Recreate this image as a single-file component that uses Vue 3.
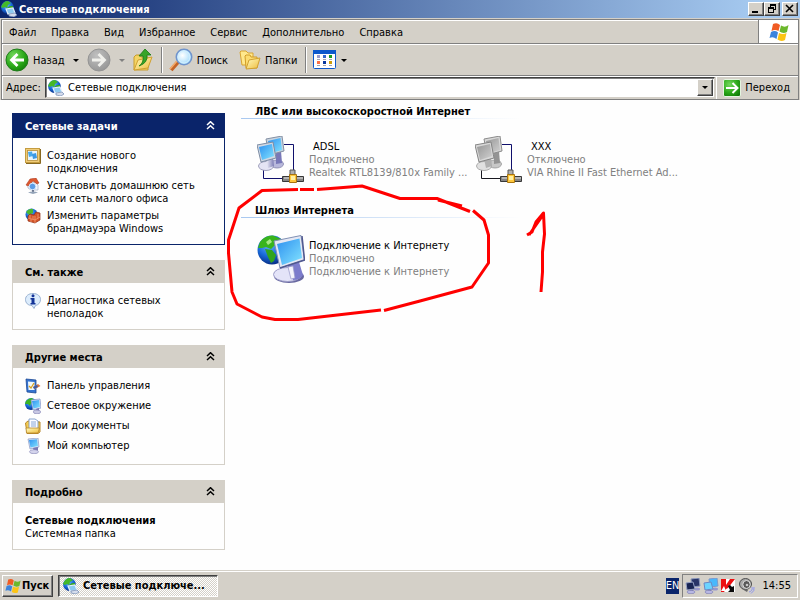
<script setup>
import { ref } from 'vue'

const menu = ['Файл', 'Правка', 'Вид', 'Избранное', 'Сервис', 'Дополнительно', 'Справка']
const address = ref('Сетевые подключения')

const panels = [
  {
    title: 'Сетевые задачи',
    primary: true,
    items: [
      { icon: 'new-connection', lines: ['Создание нового', 'подключения'] },
      { icon: 'home-network', lines: ['Установить домашнюю сеть', 'или сеть малого офиса'] },
      { icon: 'firewall', lines: ['Изменить параметры', 'брандмауэра Windows'] },
    ],
  },
  {
    title: 'См. также',
    items: [{ icon: 'info', lines: ['Диагностика сетевых', 'неполадок'] }],
  },
  {
    title: 'Другие места',
    items: [
      { icon: 'control-panel', lines: ['Панель управления'] },
      { icon: 'globe-pc', lines: ['Сетевое окружение'] },
      { icon: 'documents', lines: ['Мои документы'] },
      { icon: 'computer', lines: ['Мой компьютер'] },
    ],
  },
  { title: 'Подробно', details: { name: 'Сетевые подключения', kind: 'Системная папка' } },
]

const groups = [
  {
    title: 'ЛВС или высокоскоростной Интернет',
    items: [
      { icon: 'lan-on', name: 'ADSL', indent: true, status: 'Подключено', device: 'Realtek RTL8139/810x Family ...' },
      { icon: 'lan-off', name: 'XXX', indent: true, status: 'Отключено', device: 'VIA Rhine II Fast Ethernet Ad...' },
    ],
  },
  {
    title: 'Шлюз Интернета',
    items: [
      { icon: 'gateway', name: 'Подключение к Интернету', status: 'Подключено', device: 'Подключение к Интернету' },
    ],
  },
]
</script>

<template>
  <svg class="sprite" aria-hidden="true">
    <defs>
      <linearGradient id="g-screen" x1="0" y1="0" x2="1" y2="1">
        <stop offset="0" stop-color="#2c90f0" /><stop offset="1" stop-color="#84e4ff" />
      </linearGradient>
      <linearGradient id="g-grey" x1="0" y1="0" x2="1" y2="1">
        <stop offset="0" stop-color="#969696" /><stop offset="1" stop-color="#d0d0d0" />
      </linearGradient>
      <linearGradient id="g-stand" x1="0" y1="0" x2="1" y2="0">
        <stop offset="0" stop-color="#f4f4fc" /><stop offset="1" stop-color="#7c7cb4" />
      </linearGradient>
      <linearGradient id="g-folder" x1="0" y1="0" x2="1" y2="1">
        <stop offset="0" stop-color="#fffbc0" /><stop offset="1" stop-color="#eebc3c" />
      </linearGradient>
      <radialGradient id="g-sea" cx=".4" cy=".3" r=".7">
        <stop offset="0" stop-color="#68b8ff" /><stop offset=".6" stop-color="#1868d8" /><stop offset="1" stop-color="#083088" />
      </radialGradient>
      <radialGradient id="g-green" cx=".35" cy=".3" r=".8">
        <stop offset="0" stop-color="#74d85c" /><stop offset=".6" stop-color="#2aa818" /><stop offset="1" stop-color="#107c08" />
      </radialGradient>
      <radialGradient id="g-disc" cx=".4" cy=".3" r=".8">
        <stop offset="0" stop-color="#c0c0c0" /><stop offset="1" stop-color="#929292" />
      </radialGradient>
      <radialGradient id="g-lens" cx=".4" cy=".4" r=".6">
        <stop offset="0" stop-color="#fff" /><stop offset="1" stop-color="#a4dcfc" />
      </radialGradient>
    </defs>

    <symbol id="globe-pc" viewBox="0 0 16 16">
      <circle cx="6" cy="6" r="6" fill="url(#g-sea)" />
      <path d="M1 3Q4 0 7 0L9 2L6 5L5 8L3 6L0 6Z" fill="#3cb424" />
      <path d="M6 2L15 1L16 10L8 12Z" fill="#dce4f8" stroke="#7c90c4" stroke-width=".7" />
      <path d="M7 3L14 2L15 9L8.500 10.500Z" fill="url(#g-screen)" />
      <path d="M11 11L14 10L14 13L12 14Z" fill="#7474b4" />
      <ellipse cx="12" cy="13.900" rx="3.700" ry="1.900" fill="#c8c8e4" stroke="#8080b0" stroke-width=".6" />
    </symbol>

    <symbol id="connections" viewBox="0 0 16 16">
      <circle cx="6.500" cy="6.500" r="6.400" fill="url(#g-sea)" />
      <path d="M1 4Q3 0 7 0L10 2L7 4L6 7L4 6L2 7L0 6Z" fill="#44b828" />
      <path d="M6 7L9 5L12 5L12 8L9 11L8 12Z" fill="#38a824" />
      <path d="M5 8L12 7L14 12L7 13Z" fill="#8ccaf0" stroke="#e4f0fc" stroke-width="1.200" />
      <path d="M8 13L14 12L16 14L13 16L8 15Z" fill="#d4dcec" stroke="#7088b0" stroke-width=".7" />
    </symbol>

    <symbol id="computer" viewBox="0 0 16 16">
      <path d="M3 1L13 0L14 9L5 11Z" fill="#dce4f4" stroke="#8898c4" stroke-width=".7" />
      <path d="M4 2L12 1.200L13 8L5.500 9.500Z" fill="url(#g-screen)" />
      <path d="M8 10L13 9L13 14L9 14Z" fill="#7878b4" />
      <ellipse cx="9" cy="13.700" rx="4.500" ry="2" fill="#d4d4ec" stroke="#8484b4" stroke-width=".6" />
    </symbol>

    <symbol id="lan-on" viewBox="0 0 48 48">
      <path d="M27 8.500H36.500V35M6.500 34V42.500H25" fill="none" stroke="#10106c" />
      <ellipse cx="20" cy="28" rx="6.500" ry="4" fill="#b8b8dc" stroke="#8080a8" stroke-width=".8" />
      <path d="M19 16L24 15L25 27L19 28Z" fill="#7878b8" />
      <path d="M9 3L25 0L27 15L12 19Z" fill="#c8d4e0" stroke="#8490a4" />
      <path d="M11 5L23.500 2L25 14L14 17Z" fill="url(#g-screen)" />
      <ellipse cx="9" cy="30" rx="7.500" ry="4.500" fill="#e4e4f4" stroke="#8c8cac" stroke-width=".8" />
      <path d="M9 23L16 21L17 30L11 32Z" fill="url(#g-stand)" />
      <path d="M0 9L16 6L19 22L4 26Z" fill="#d0d8e4" stroke="#7c8ca4" />
      <path d="M2 11L15 8L17 20L5 24Z" fill="url(#g-screen)" />
      <path d="M33 34H38V40H33Z" fill="#b0b0b0" stroke="#585858" />
      <path d="M25.500 40.500H46.500V45.500H25.500Z" fill="#848484" stroke="#383838" />
      <path d="M27 42H46" stroke="#e4e4e4" />
      <path d="M32.500 38.500H39.500V46.500H32.500Z" fill="#ffc83c" stroke="#a87410" />
      <path d="M34 40H38V44H34Z" fill="#fff0a4" />
    </symbol>

    <symbol id="lan-off" viewBox="0 0 48 48">
      <path d="M27 8.500H36.500V35" fill="none" stroke="#10106c" />
      <path d="M6.500 34V42.500H25" fill="none" stroke="#181820" />
      <ellipse cx="20" cy="28" rx="6.500" ry="4" fill="#c8c8c8" stroke="#949494" stroke-width=".8" />
      <path d="M19 16L24 15L25 27L19 28Z" fill="#949494" />
      <path d="M9 3L25 0L27 15L12 19Z" fill="#d8d8d8" stroke="#8c8c8c" />
      <path d="M11 5L23.500 2L25 14L14 17Z" fill="url(#g-grey)" />
      <ellipse cx="9" cy="30" rx="7.500" ry="4.500" fill="#e0e0e0" stroke="#9c9c9c" stroke-width=".8" />
      <path d="M9 23L16 21L17 30L11 32Z" fill="#b0b0b0" />
      <path d="M0 9L16 6L19 22L4 26Z" fill="#d8d8d8" stroke="#848484" />
      <path d="M2 11L15 8L17 20L5 24Z" fill="url(#g-grey)" />
      <path d="M33 34H38V40H33Z" fill="#b0b0b0" stroke="#585858" />
      <path d="M25.500 40.500H46.500V45.500H25.500Z" fill="#848484" stroke="#383838" />
      <path d="M27 42H46" stroke="#e4e4e4" />
      <path d="M32.500 38.500H39.500V46.500H32.500Z" fill="#ffc83c" stroke="#a87410" />
      <path d="M34 40H38V44H34Z" fill="#fff0a4" />
    </symbol>

    <symbol id="gateway" viewBox="0 0 48 48">
      <circle cx="15" cy="15" r="14.500" fill="url(#g-sea)" />
      <path d="M3 7Q8 0 16 .500L24 4L21 9L17 11L14 14L9 12L5 13L1 13Z" fill="#38b41c" />
      <path d="M8 14L15 15L19 20L17 26L14 28L11 22Z" fill="#30a41c" />
      <path d="M9 7L13 4L15 7L11 10Z" fill="#a4e884" />
      <ellipse cx="32" cy="41.500" rx="15" ry="6.500" fill="#6868a0" />
      <ellipse cx="30.500" cy="39.500" rx="14" ry="7" fill="#e4e4f8" stroke="#9c9cc8" />
      <path d="M30 30L42 27L46 40Q43 45 36 45Z" fill="#7c7ccc" />
      <path d="M31 32L36 31L38 43L34 44Z" fill="#f4f4fc" stroke="#9898c8" stroke-width=".7" />
      <path d="M17 6L44 .500L47.500 25L23 33Z" fill="#e4e8f4" stroke="#8090b4" />
      <path d="M45 1L47.500 25L23 33" fill="none" stroke="#505890" stroke-width="1.500" />
      <path d="M20 9L42.500 3.500L45 23L25 30Z" fill="url(#g-screen)" />
    </symbol>

    <symbol id="flag" viewBox="0 0 20 18">
      <path d="M4 1Q8-1 11 2L9.500 8Q6 6 2.500 8Z" fill="#f05c24" />
      <path d="M12 2.500Q16 5 19.500 2L18 9Q14 11 10.500 8.500Z" fill="#6cb82c" />
      <path d="M2 9Q6 7 9 9.500L7.500 16Q4 13 .500 15Z" fill="#3c84dc" />
      <path d="M10 10Q14 12 17.500 10L16 17Q12 19 8.500 16.500Z" fill="#fcc414" />
    </symbol>

    <symbol id="back" viewBox="0 0 24 24">
      <circle cx="12" cy="12" r="11" fill="url(#g-green)" stroke="#207c1c" />
      <path d="M19 12H7M12.500 6L6.500 12L12.500 18" fill="none" stroke="#fff" stroke-width="2.800" />
    </symbol>
    <symbol id="forward" viewBox="0 0 24 24">
      <circle cx="12" cy="12" r="11" fill="url(#g-disc)" stroke="#949494" />
      <path d="M5 12H17M11.500 6L17.500 12L11.500 18" fill="none" stroke="#f0f0ec" stroke-width="2.800" />
    </symbol>
    <symbol id="up" viewBox="0 0 20 24">
      <path d="M1 9L3 7H7L8 9H15V22H1Z" fill="#f4d464" stroke="#c89c2c" />
      <path d="M1 22L5 12L19 9L15 20Z" fill="url(#g-folder)" stroke="#d0a030" />
      <path d="M6 18Q11 15 10 8H6L12 1L18 7H14Q15 15 6 18Z" fill="#38a428" stroke="#187810" stroke-width=".8" />
    </symbol>
    <symbol id="search" viewBox="0 0 24 24">
      <path d="M2 22L9 14" stroke="#c46428" stroke-width="4" />
      <path d="M1 21L8 13" stroke="#f4ac6c" stroke-width="1.500" />
      <circle cx="15" cy="9" r="7.700" fill="url(#g-lens)" stroke="#7094cc" stroke-width="1.600" />
      <circle cx="15" cy="9" r="6" fill="none" stroke="#d4f0ff" />
    </symbol>
    <symbol id="folders" viewBox="0 0 22 20">
      <path d="M1 2L2 1H7L9 3H14V15H3Z" fill="#ffe88c" stroke="#d8a430" />
      <path d="M6 6L7 5H11L12 7H18V18H7Z" fill="#fcdc70" stroke="#d09c28" />
      <path d="M7 19L10 10L21 8L18 18Z" fill="url(#g-folder)" stroke="#d0a030" />
    </symbol>
    <symbol id="views" viewBox="0 0 24 20">
      <rect x=".5" y=".5" width="22" height="18" rx="1" fill="#fff" stroke="#0c58cc" />
      <path d="M0 0H23V4H0Z" fill="#0c58cc" />
      <path d="M4 5H7V8H4Z" fill="#9c9ccc" /><path d="M10 5H13V8H10Z" fill="#3468cc" /><path d="M16 5H19V8H16Z" fill="#189c20" />
      <path d="M4 11H7V14H4Z" fill="#fc7044" /><path d="M10 11H13V14H10Z" fill="#0838a0" /><path d="M16 11H19V14H16Z" fill="#cc9c08" />
      <path d="M4 9.500H7M10 9.500H13M16 9.500H19M4 15.500H7M10 15.500H13M16 15.500H19" stroke="#a0a4b0" />
    </symbol>
    <symbol id="go" viewBox="0 0 18 18">
      <rect x=".5" y=".5" width="17" height="17" rx="1.500" fill="url(#g-green)" stroke="#e4f4e0" />
      <path d="M3 9H14M9.500 4L14.500 9L9.500 14" fill="none" stroke="#fff" stroke-width="2" />
    </symbol>

    <symbol id="new-connection" viewBox="0 0 16 16">
      <rect x=".5" y=".5" width="14" height="14" fill="#f0cc78" stroke="#c49c40" />
      <path d="M15.500 1V15.500H1" fill="none" stroke="#886820" />
      <rect x="2.500" y="2.500" width="10" height="10" fill="#e8f4fc" stroke="#b89038" stroke-width=".8" />
      <path d="M3 4L7 3.500L8 8L4 9Z" fill="#48a8ec" /><path d="M7 6L11 5L12 10L8 11Z" fill="#3c98e4" />
    </symbol>
    <symbol id="home-network" viewBox="0 0 16 16">
      <path d="M3 6L10 4L13 7V12L6 12L3 10Z" fill="#f4f8fc" stroke="#90a0b8" stroke-width=".6" />
      <path d="M1 7L5 1L11 0L14 5L12 6L8 3L3 8Z" fill="#dc5830" stroke="#a43418" stroke-width=".5" />
      <circle cx="7.500" cy="8.500" r="3.300" fill="#5c9ce4" stroke="#d8e8fc" />
      <path d="M7 12H9V14H7Z" fill="#6c7890" /><path d="M3 14.500Q8 12.500 13 14.500L8 16Z" fill="#94a4b8" />
    </symbol>
    <symbol id="firewall" viewBox="0 0 16 16">
      <circle cx="6.500" cy="6.500" r="6" fill="url(#g-sea)" />
      <path d="M1 4Q4 0 8 1L8 5L4 7Z" fill="#4cb830" />
      <path d="M3 8L5 6L9 7L11 4L15 5V12L10 15L3 13Z" fill="#d45428" stroke="#902c14" stroke-width=".7" />
      <path d="M3 10L10 12L15 9M5 7V10M8 8V11M6 11V14M10 8V15M13 6V10" fill="none" stroke="#f49c74" stroke-width=".8" />
    </symbol>
    <symbol id="info" viewBox="0 0 16 16">
      <path d="M8 .5C12.500 .500 15.500 3 15.500 6.500C15.500 10 13 12 10.500 12.500L9 15.500L7 12.500C3 12.500 .500 10 .500 6.500C.500 3 3.500 .500 8 .500Z" fill="#dcecfc" stroke="#98b0d0" />
      <circle cx="8" cy="2.800" r="1.500" fill="#143498" />
      <path d="M5.500 5H9.500V10H10.500V11.500H5.500V10H6.500V6.500H5.500Z" fill="#143498" />
    </symbol>
    <symbol id="control-panel" viewBox="0 0 16 16">
      <path d="M1 1L11 2V15L2 14Z" fill="#3474d0" stroke="#1c4894" stroke-width=".8" />
      <path d="M3 3.500L9.500 4V12L3.500 12Z" fill="#f0f8fc" />
      <path d="M4 8L6 10L9 5" fill="none" stroke="#d8a020" stroke-width="1.300" />
      <path d="M8 9L13 6L15.500 8L10 11Z" fill="#d87840" /><path d="M8 9L12 7L13 9L9 11Z" fill="#385cac" />
    </symbol>
    <symbol id="documents" viewBox="0 0 16 16">
      <path d="M.500 5L3 3L15 4V14L13 15.500H2Z" fill="#f4cc50" stroke="#b8882c" />
      <path d="M4 1H10L13 3V12H4Z" fill="#fcfcff" stroke="#6c90c4" stroke-width=".8" />
      <path d="M6 4H11M6 6H11M6 8H11" stroke="#88a8d8" />
      <path d="M1 10H14.500L13 15H1.500Z" fill="url(#g-folder)" stroke="#b8882c" stroke-width=".8" />
    </symbol>

    <symbol id="tray-lan-idle" viewBox="0 0 16 16">
      <path d="M6 1L14 0L15 8L7 9Z" fill="#283468" stroke="#8c98bc" /><ellipse cx="12" cy="11" rx="3" ry="1.500" fill="#9898cc" />
      <path d="M1 5L8 4L10 11L2 12Z" fill="#182454" stroke="#94a0c4" /><path d="M5 12H8V14H5Z" fill="#7c7cb4" /><ellipse cx="6" cy="14" rx="4" ry="1.700" fill="#b8b8e4" stroke="#6c6ca4" stroke-width=".5" />
    </symbol>
    <symbol id="tray-lan" viewBox="0 0 16 16">
      <path d="M6 1L14 0L15 8L7 9Z" fill="#48b8fc" stroke="#7c98cc" /><ellipse cx="12" cy="11" rx="3" ry="1.500" fill="#9898cc" />
      <path d="M1 5L8 4L10 11L2 12Z" fill="#6cd4ff" stroke="#6c88c4" /><path d="M5 12H8V14H5Z" fill="#7c7cb4" /><ellipse cx="6" cy="14" rx="4" ry="1.700" fill="#b8b8e4" stroke="#6c6ca4" stroke-width=".5" />
    </symbol>
    <symbol id="tray-antivirus" viewBox="0 0 16 16">
      <path d="M0 1H14V14H0Z" fill="#fff" />
      <path d="M0 1H5V7L9 1H14L7 10L5 11L3 14H0Z" fill="#ec1010" />
      <path d="M0 13L3 8L5 13" fill="#fff" />
      <path d="M7 8L9 7L11 9L13 8V14H7L9 12Z" fill="#0c0c0c" />
    </symbol>
    <symbol id="tray-sound" viewBox="0 0 16 16">
      <ellipse cx="6.500" cy="6" rx="6" ry="5.500" fill="#a8a8a8" stroke="#4c4c4c" />
      <ellipse cx="7.500" cy="6.500" rx="3.700" ry="4" fill="#585858" stroke="#e0e0e0" />
      <circle cx="8" cy="7" r="1.300" fill="#c8c8c8" />
      <path d="M3 11L8 14L9 12Z" fill="#686868" />
      <path d="M10 14Q14 13 13 9M12 15.500Q16 13 15 9" fill="none" stroke="#8c94f0" />
    </symbol>
  </svg>

  <div class="desktop">
    <header class="titlebar">
      <svg class="i16"><use href="#connections" /></svg>
      <h1>Сетевые подключения</h1>
      <div class="captions">
        <button class="raised caption" aria-label="Свернуть">
          <svg viewBox="0 0 12 10"><path d="M2 8H8" stroke="#000" stroke-width="2" /></svg>
        </button>
        <button class="raised caption" aria-label="Восстановить">
          <svg viewBox="0 0 12 10"><path d="M4 1H10M9.500 1V6M4.500 1V4M8 5.500H10M2 4H8M2.500 4V9M7.500 4V9M2 8.500H8" fill="none" stroke="#000" /><path d="M4 1H10M2 4H8" stroke="#000" stroke-width="2" /></svg>
        </button>
        <button class="raised caption close" aria-label="Закрыть">
          <svg viewBox="0 0 12 10"><path d="M2 1L9 8M9 1L2 8" stroke="#000" stroke-width="1.600" /></svg>
        </button>
      </div>
    </header>

    <div class="frame">
      <nav class="menubar">
        <div class="menus"><button v-for="m in menu" :key="m">{{ m }}</button></div>
        <div class="brand"><svg class="flag"><use href="#flag" /></svg></div>
      </nav>

      <div class="toolbar">
        <button class="tool"><svg class="i24"><use href="#back" /></svg>Назад</button>
        <button class="drop" aria-label="История назад"><i class="tri" /></button>
        <button class="tool" aria-label="Вперёд"><svg class="i24"><use href="#forward" /></svg></button>
        <button class="drop off" aria-label="История вперёд"><i class="tri" /></button>
        <button class="tool" aria-label="Вверх"><svg class="up"><use href="#up" /></svg></button>
        <span class="sep" />
        <button class="tool"><svg class="i24"><use href="#search" /></svg>Поиск</button>
        <button class="tool folders"><svg class="fold"><use href="#folders" /></svg>Папки</button>
        <span class="sep" />
        <button class="tool" aria-label="Вид"><svg class="views"><use href="#views" /></svg><i class="tri" /></button>
      </div>

      <form class="address" @submit.prevent>
        <label for="addr">Адрес:</label>
        <div class="combo">
          <svg class="i16"><use href="#connections" /></svg>
          <input id="addr" v-model="address" type="text" />
          <button type="button" class="raised arrow" aria-label="Список адресов"><i class="tri" /></button>
        </div>
        <button class="go"><svg><use href="#go" /></svg>Переход</button>
      </form>
    </div>

    <main class="content">
      <aside class="sidebar">
        <section v-for="p in panels" :key="p.title" class="panel" :class="{ primary: p.primary }">
          <header>
            <h2>{{ p.title }}</h2>
            <button :aria-label="'Свернуть: ' + p.title">
              <svg viewBox="0 0 9 9"><path d="M1 4L4.500 .700L8 4M1 8L4.500 4.700L8 8" fill="none" stroke="currentColor" stroke-width="1.500" /></svg>
            </button>
          </header>
          <ul v-if="p.items">
            <li v-for="it in p.items" :key="it.icon">
              <a href="#"><svg class="i16"><use :href="'#' + it.icon" /></svg><span><template v-for="(l, n) in it.lines" :key="l"><br v-if="n" />{{ l }}</template></span></a>
            </li>
          </ul>
          <div v-else class="details"><b>{{ p.details.name }}</b><span>{{ p.details.kind }}</span></div>
        </section>
      </aside>

      <div class="list">
        <section v-for="g in groups" :key="g.title" class="group">
          <h2>{{ g.title }}</h2>
          <div class="items">
            <a v-for="c in g.items" :key="c.name" href="#" class="conn">
              <svg><use :href="'#' + c.icon" /></svg>
              <span class="text">
                <span class="name" :class="{ indent: c.indent }">{{ c.name }}</span>
                <span>{{ c.status }}</span>
                <span>{{ c.device }}</span>
              </span>
            </a>
          </div>
        </section>
      </div>

      <!-- freehand red marks lying over the list -->
      <svg class="ink" viewBox="220 180 340 150" aria-hidden="true">
        <path d="M298 189.500L262 190.500L239 208L228.500 240V253L232 292L237 304L262 317L275 319.500H298L381 310M384 310.500L420 301L472 287L488.500 263V235L484 220L473 210.500M470 211.500L437 198.500H400L362 186L337 188L317 189.500M314 189.500H300M438 200L462 206" />
        <path d="M527 235L532 232L536 222L543.500 213L544.500 234L542.500 252V272L541 292M529 235L543 215" />
      </svg>
    </main>

    <footer class="taskbar">
      <button class="raised start"><svg><use href="#flag" /></svg>Пуск</button>
      <button class="task"><svg class="i16"><use href="#connections" /></svg><span>Сетевые подключе...</span></button>
      <span class="lang">EN</span>
      <div class="tray">
        <svg class="i16"><use href="#tray-lan-idle" /></svg>
        <svg class="i16"><use href="#tray-lan" /></svg>
        <svg class="i16"><use href="#tray-antivirus" /></svg>
        <svg class="i16"><use href="#tray-sound" /></svg>
        <time>14:55</time>
      </div>
    </footer>
  </div>
</template>

<style>
body {
  background: #fefefe;
}
</style>

<style scoped>
* {
  box-sizing: border-box;
}
.sprite {
  position: absolute;
  width: 0;
  height: 0;
}
.desktop {
  display: flex;
  flex-direction: column;
  min-height: 100vh;
  font: 11px/13px Tahoma, "DejaVu Sans Condensed", "DejaVu Sans", sans-serif;
  color: #000;
}
button,
input {
  font: inherit;
  color: inherit;
  background: none;
  border: 0;
  padding: 0;
  margin: 0;
}
a {
  color: inherit;
  text-decoration: none;
}
svg {
  flex: none;
  display: block;
}
h1,
h2 {
  margin: 0;
  font-size: 11px;
  line-height: 13px;
  font-weight: bold;
}
.i16 {
  width: 16px;
  height: 16px;
}
.i24 {
  width: 24px;
  height: 24px;
}
.raised {
  background: #d4d0c8;
  border: 1px solid;
  border-color: #fff #404040 #404040 #fff;
  box-shadow: inset -1px -1px #808080;
}
.tri {
  display: block;
  border: 3px solid transparent;
  border-top-color: currentColor;
  border-bottom: 0;
}

.titlebar {
  display: flex;
  align-items: center;
  gap: 2px;
  height: 18px;
  padding: 0 2px 0 1px;
  background: linear-gradient(90deg, #0a246a, #a6caf0 95%);
  color: #fff;
}
.captions {
  display: flex;
  margin-left: auto;
}
.caption {
  width: 16px;
  height: 14px;
}
.caption svg {
  width: 12px;
  height: 10px;
  margin: 1px;
}
.close {
  margin-left: 2px;
}

.frame {
  background: #d4d0c8;
  padding: 1px 1px 0;
}
.frame > * {
  border: 1px solid #808080;
  border-top: 0;
  box-shadow: inset 1px 1px #fff;
}
.menubar {
  display: flex;
  height: 25px;
}
.frame > .menubar {
  border-top: 1px solid #808080;
}
.menus {
  flex: 1;
  display: flex;
  align-items: center;
  gap: 15px;
  padding: 1px 0 0 7px;
  border-right: 1px solid #808080;
}
.brand {
  width: 39px;
  display: flex;
  align-items: center;
  justify-content: center;
  background: #fff;
}
.flag {
  width: 20px;
  height: 18px;
}
.toolbar {
  display: flex;
  align-items: center;
  height: 32px;
  padding: 1px 0 0 3px;
}
.tool {
  display: flex;
  align-items: center;
  gap: 4px;
}
.drop {
  padding: 8px;
}
.off {
  color: #808080;
}
.up {
  width: 20px;
  height: 24px;
}
.sep {
  width: 2px;
  height: 26px;
  margin: 0 6px 0 8px;
  border-left: 1px solid #808080;
  border-right: 1px solid #fff;
}
.folders {
  margin-left: 11px;
}
.fold {
  width: 22px;
  height: 20px;
}
.views {
  width: 24px;
  height: 20px;
}
.address {
  display: flex;
  align-items: center;
  height: 24px;
  padding-left: 4px;
}
.address label {
  width: 39px;
}
.combo {
  flex: 1;
  display: flex;
  align-items: center;
  gap: 4px;
  height: 21px;
  padding: 1px 1px 1px 2px;
  background: #fff;
  border: 1px solid;
  border-color: #404040 #d4d0c8 #d4d0c8 #404040;
  box-shadow: inset 1px 1px #808080;
}
.combo input {
  flex: 1;
  min-width: 0;
  outline: 0;
}
.arrow {
  width: 16px;
  height: 17px;
  display: grid;
  place-items: center;
}
.go {
  display: flex;
  align-items: center;
  gap: 4px;
  padding: 0 8px 0 6px;
  margin-left: 1px;
  height: 22px;
  border-left: 1px solid #fff;
}
.go svg {
  width: 18px;
  height: 18px;
}

.content {
  position: relative;
  flex: 1;
  display: flex;
  background: #fefefe;
}
.sidebar {
  display: flex;
  flex-direction: column;
  gap: 15px;
  width: 225px;
  padding: 13px 0 20px 12px;
}
.panel {
  border: 1px solid #d4d0c8;
  border-top: 0;
}
.panel header {
  display: flex;
  align-items: center;
  justify-content: space-between;
  height: 23px;
  padding: 0 9px 0 12px;
  background: #d4d0c8;
}
.panel header h2 {
  padding-top: 2px;
}
.panel header svg {
  width: 9px;
  height: 9px;
}
.panel.primary {
  border-color: #0a246a;
}
.primary header {
  height: 25px;
  background: #0a246a;
  color: #fff;
}
.panel ul {
  list-style: none;
  margin: 0;
  padding: 10px 8px 9px 12px;
  display: flex;
  flex-direction: column;
  gap: 3px;
}
.panel a {
  display: flex;
  gap: 6px;
  min-height: 17px;
}
.panel a span {
  padding-top: 1px;
}
.details {
  display: flex;
  flex-direction: column;
  padding: 11px 12px 9px;
}

.list {
  flex: 1;
  min-width: 0;
  padding-left: 16px;
}
.group {
  padding-bottom: 15px;
}
.group h2 {
  height: 19px;
  padding: 5px 0 0 14px;
  background: linear-gradient(90deg, #a8c8f0, #fefefe 280px) 0 100% / 100% 1px no-repeat;
}
.items {
  display: flex;
  flex-wrap: wrap;
  padding: 17px 0 0 16px;
}
.conn {
  display: flex;
  gap: 4px;
  width: 218px;
}
.conn svg {
  width: 48px;
  height: 48px;
}
.text {
  display: flex;
  flex-direction: column;
  padding-top: 4px;
  color: #808080;
  white-space: nowrap;
}
.name {
  color: #000;
}
.indent {
  padding-left: 4px;
}
.ink {
  position: absolute;
  left: 220px;
  top: 80px;
  width: 340px;
  height: 150px;
  pointer-events: none;
}
.ink path {
  fill: none;
  stroke: #f00;
  stroke-width: 3;
  stroke-linejoin: round;
}

.taskbar {
  display: flex;
  align-items: center;
  height: 30px;
  padding: 1px 2px 0;
  background: #d4d0c8;
  box-shadow: inset 0 1px #d4d0c8, inset 0 2px #fff;
  font-weight: bold;
}
.start {
  display: flex;
  align-items: center;
  gap: 1px;
  width: 51px;
  height: 22px;
  padding: 0 2px;
}
.start svg {
  width: 16px;
  height: 16px;
}
.task {
  display: flex;
  align-items: center;
  gap: 4px;
  width: 160px;
  height: 22px;
  margin-left: 5px;
  padding: 0 4px;
  border: 1px solid;
  border-color: #404040 #fff #fff #404040;
  box-shadow: inset 1px 1px #808080;
  background: repeating-conic-gradient(#fff 0 25%, #d4d0c8 0 50%) 0 0 / 2px 2px;
  white-space: nowrap;
}
.lang {
  margin-left: auto;
  height: 16px;
  line-height: 16px;
  background: #0a246a;
  color: #fff;
  font-weight: normal;
}
.tray {
  display: flex;
  align-items: center;
  gap: 2px;
  height: 24px;
  margin-left: 3px;
  padding: 0 6px 0 2px;
  border: 1px solid;
  border-color: #808080 #fff #fff #808080;
  font-weight: normal;
}
.tray time {
  margin-left: 5px;
}
</style>
